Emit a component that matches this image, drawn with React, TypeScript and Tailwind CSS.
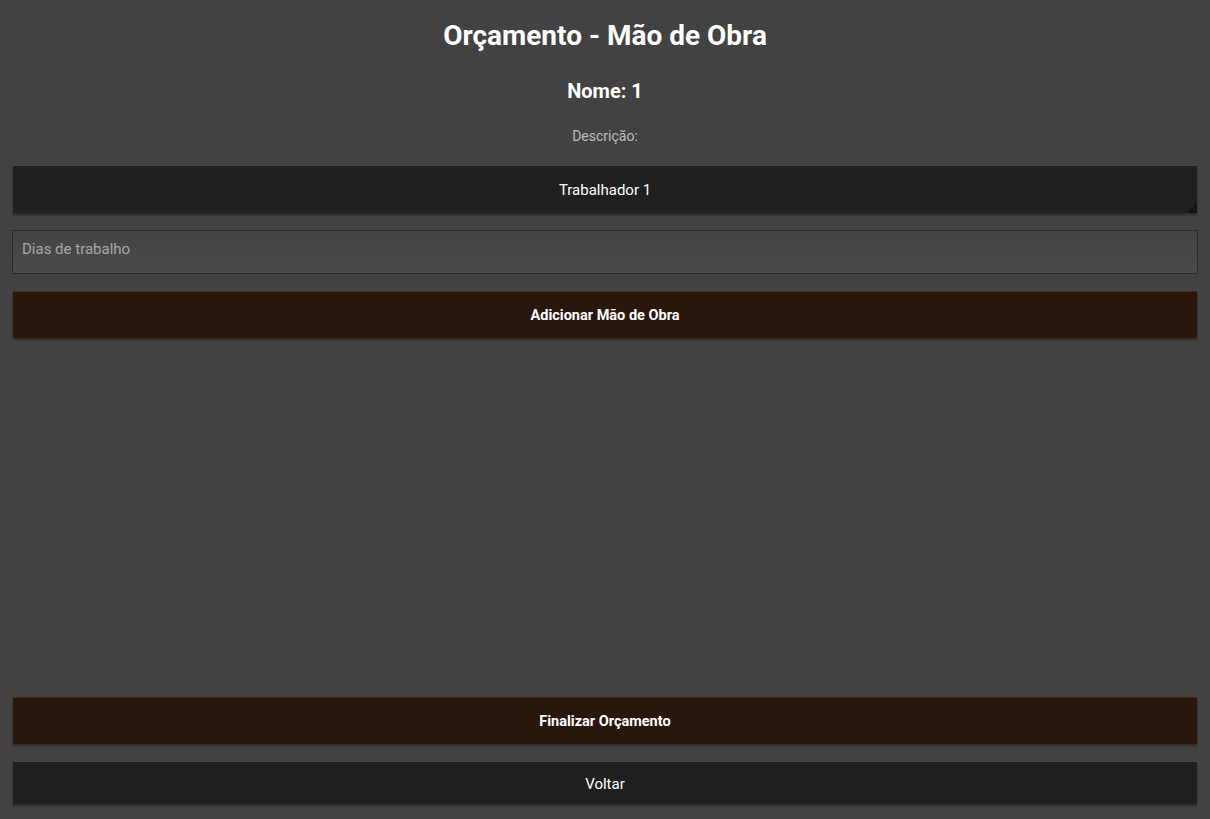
export default function App() {
  return (
    <div
      className="flex h-[819px] flex-col bg-[#424242] px-[13px] text-white"
      style={{ fontFamily: "Roboto, 'Liberation Sans', sans-serif" }}
    >
      <h1 className="mt-[19px] text-center text-[28px] leading-[33px] font-bold">
        Orçamento - Mão de Obra
      </h1>
      <h2 className="mt-[27px] text-center text-[20px] leading-[24px] font-bold">Nome: 1</h2>
      <p className="mt-[25px] text-center text-[14px] leading-[16px] text-[#bdbdbd]">Descrição:</p>

      <div className="relative mt-[22px]">
        <textarea
          readOnly
          defaultValue="Trabalhador 1"
          className="block h-[47px] w-full resize-none bg-[#202020] pt-[15px] text-center text-[15px] leading-[18px] text-white shadow-[0_2px_2px_rgba(0,0,0,0.35)] outline-none"
        />
        {/* resize grip */}
        <div className="pointer-events-none absolute right-0 bottom-0 h-0 w-0 border-b-[10px] border-l-[10px] border-b-[#141414] border-l-transparent" />
      </div>

      <input
        placeholder="Dias de trabalho"
        className="-mx-px mt-[17px] h-[44px] border border-[#2a2a2a] bg-gradient-to-b from-[#444444] to-[#4a4a4a] px-[9px] pb-[6px] text-[15px] text-white outline-none placeholder:text-[#a8a8a8]"
      />

      <button className="mt-[17px] h-[47px] border-t border-[#4a2a17] bg-[#29170e] pt-[2px] text-[14.5px] font-bold text-white shadow-[0_2px_2px_rgba(0,0,0,0.35)]">
        Adicionar Mão de Obra
      </button>

      <div className="flex-1" />

      <button className="h-[47px] border-t border-[#4a2a17] bg-[#29170e] pt-[2px] text-[14.5px] font-bold text-white shadow-[0_2px_2px_rgba(0,0,0,0.35)]">
        Finalizar Orçamento
      </button>
      <button className="mt-[18px] mb-[15px] h-[42px] bg-[#202020] pt-[2px] text-[15px] text-white shadow-[0_2px_2px_rgba(0,0,0,0.35)]">
        Voltar
      </button>
    </div>
  );
}
